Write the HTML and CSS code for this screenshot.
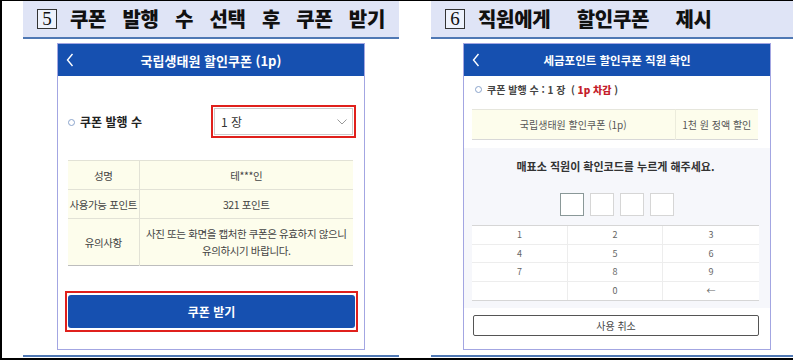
FILE: index.html
```html
<!DOCTYPE html>
<html lang="ko">
<head>
<meta charset="utf-8">
<link rel="stylesheet" href="styles.css">
</head>
<body>
<div class="page">
  <section class="col col1">
    <div class="band"><span class="num">5</span><h1>쿠폰 발행 수 선택 후 쿠폰 받기</h1></div>
    <div class="phone">
      <div class="bar">
        <svg class="back" width="8" height="14" viewBox="0 0 8 14"><polyline points="6.5,1 1.5,7 6.5,13" fill="none" stroke="#fff" stroke-width="1.4"/></svg>
        <span class="bar-title">국립생태원 할인쿠폰 (1p)</span>
        <span></span>
      </div>
      <div class="body1">
        <div class="qty">
          <span class="lbl"><i class="dot"></i>쿠폰 발행 수</span>
          <div class="sel-wrap">
            <div class="sel"><span>1 장</span>
              <svg width="10" height="6" viewBox="0 0 10 6"><polyline points="0.5,0.5 5,5 9.5,0.5" fill="none" stroke="#999" stroke-width="1"/></svg>
            </div>
          </div>
        </div>
        <table class="info">
          <tr class="r1"><th>성명</th><td>테***인</td></tr>
          <tr class="r2"><th>사용가능 포인트</th><td>321 포인트</td></tr>
          <tr class="r3"><th>유의사항</th><td>사진 또는 화면을 캡처한 쿠폰은 유효하지 않으니<br>유의하시기 바랍니다.</td></tr>
        </table>
        <div class="btn-wrap"><div class="btn">쿠폰 받기</div></div>
      </div>
    </div>
    <div class="foot"></div>
  </section>
  <section class="col col2">
    <div class="band"><span class="num">6</span><h1>직원에게 할인쿠폰 제시</h1></div>
    <div class="phone">
      <div class="bar">
        <svg class="back" width="8" height="14" viewBox="0 0 8 14"><polyline points="6.5,1 1.5,7 6.5,13" fill="none" stroke="#fff" stroke-width="1.4"/></svg>
        <span class="bar-title small">세금포인트 할인쿠폰 직원 확인</span>
        <span></span>
      </div>
      <div class="body2">
        <p class="issued"><i class="dot"></i>쿠폰 발행 수 : 1 장 &nbsp;( <b class="red">1p 차감</b> )</p>
        <table class="coupon">
          <tr><td class="c1">국립생태원 할인쿠폰 (1p)</td><td class="c2">1천 원 정액 할인</td></tr>
        </table>
        <div class="panel">
          <p class="msg">매표소 직원이 확인코드를 누르게 해주세요.</p>
          <div class="codes"><span class="code on"></span><span class="code"></span><span class="code"></span><span class="code"></span></div>
          <div class="keypad">
            <span>1</span><span>2</span><span>3</span>
            <span>4</span><span>5</span><span>6</span>
            <span>7</span><span>8</span><span>9</span>
            <span></span><span>0</span><span>←</span>
          </div>
        </div>
        <div class="cancel">사용 취소</div>
      </div>
    </div>
    <div class="foot"></div>
  </section>
</div>
</body>
</html>
```
FILE: styles.css
```css
* { box-sizing: border-box; margin: 0; padding: 0; }
html, body { width: 793px; height: 360px; overflow: hidden; background: #fff; }
body { font-family: "Noto Sans CJK KR", "Noto Sans", sans-serif; color: #333; }

.page {
  display: flex;
  height: 360px;
  border-left: 2px solid #000;
  border-top: 1px solid #000;
  border-bottom: 2px solid #000;
  padding-left: 21px;
  gap: 32px;
}
.col { display: flex; flex-direction: column; }
.col1 { width: 376px; }
.col2 { flex: 1; }

.band {
  height: 38px;
  background: #dfe4f6;
  border-bottom: 2px solid #4f78b4;
  display: flex;
  align-items: center;
  padding-left: 14px;
}
.num {
  width: 20px; height: 20px;
  border: 1px solid #333;
  background: #eef2fc;
  font-family: "Liberation Serif", serif;
  font-size: 19px;
  line-height: 18px;
  text-align: center;
  color: #111;
  margin-right: 13px;
  flex: none;
}
.band h1 {
  font-size: 20px;
  font-weight: 900;
  color: #111;
  letter-spacing: -0.3px;
  line-height: 24px;
  white-space: nowrap;
}
.col1 .band h1 { word-spacing: 11px; }
.col2 .band h1 { word-spacing: 21px; }

.phone {
  width: 308px;
  height: 307px;
  margin-top: 4px;
  border: 1px solid #a3a6e2;
  background: #fff;
  display: flex;
  flex-direction: column;
}
.col1 .phone { margin-left: 34px; }
.col2 .phone { margin-left: 32px; }

.foot { margin-top: auto; height: 2px; background: #4f78b4; margin-bottom: 1px; }

.bar {
  height: 32px;
  background: #1650b0;
  display: grid;
  grid-template-columns: 30px 1fr 30px;
  align-items: center;
}
.back { margin-left: 8px; }
.bar-title { color: #fff; font-weight: 700; font-size: 13px; text-align: center; }
.bar-title.small { font-size: 11.5px; }

.dot {
  display: inline-block;
  width: 7px; height: 7px;
  border: 1.5px solid #8aa4cc;
  border-radius: 50%;
  margin-right: 5px;
  vertical-align: 1px;
}

/* left body */
.body1 { padding: 29px 8px 0 10px; }
.qty { display: flex; align-items: center; justify-content: space-between; height: 33px; }
.lbl { font-size: 12px; font-weight: 700; color: #222; }
.sel-wrap { width: 145px; height: 33px; border: 2px solid #e0201c; padding: 1px; }
.sel {
  height: 100%;
  border: 1px solid #ccc;
  display: flex; align-items: center; justify-content: space-between;
  padding: 0 5px 0 6px;
  font-size: 12px; color: #333;
}
.info {
  margin-top: 22px;
  width: 285px;
  border-collapse: collapse;
  background: #fdfdec;
  font-size: 10.5px;
  letter-spacing: -0.4px;
  color: #444;
  border-top: 1px solid #bdbdbd;
  border-bottom: 1px solid #bdbdbd;
}
.info th, .info td { font-weight: 400; text-align: center; border-top: 1px solid #e2e2d6; white-space: nowrap; }
.info th { width: 71px; border-right: 1px solid #e2e2d6; }
.info td { line-height: 17px; }
.info .r1 { height: 29px; }
.info .r2 { height: 29px; }
.info .r3 { height: 47px; }

.btn-wrap { margin-top: 25px; width: 293px; height: 41px; margin-left: -3px; border: 2px solid #e0201c; padding: 2px 1px; }
.btn {
  height: 100%;
  background: #1650b0;
  border-radius: 3px;
  color: #fff; font-weight: 700; font-size: 12px;
  display: flex; align-items: center; justify-content: center;
}

/* right body */
.body2 { padding: 7px 11px 0 8px; }
.issued { font-size: 10px; font-weight: 700; color: #444; line-height: 14px; padding-left: 3px; }
.red { color: #c4202a; }
.coupon {
  margin-top: 12px;
  width: 286px;
  border-collapse: collapse;
  background: #fdfdec;
  font-size: 10px; color: #555;
  border-top: 1px solid #e6e6dc; border-bottom: 1px solid #d8d8d8;
}
.coupon tr { height: 30px; }
.coupon td { text-align: center; }
.coupon .c1 { width: 203px; border-right: 1px solid #ececdc; }
.panel {
  margin: 8px -11px 0 -8px;
  padding: 0 11px 0 8px;
  background: #f6f7fb;
  height: 160px;
}
.msg { text-align: center; font-size: 11px; font-weight: 700; color: #333; padding-top: 10px; line-height: 16px; }
.codes { display: flex; justify-content: center; gap: 6px; margin-top: 19px; padding-left: 2px; }
.code { width: 24px; height: 23px; background: #fff; border: 1px solid #d6d6d6; }
.code.on { border-color: #8a9898; }
.keypad {
  margin-top: 9px;
  display: grid;
  grid-template-columns: 96px 95px 1fr;
  background: #fff;
  border-top: 1px solid #d6d6d6;
  border-bottom: 1px solid #d6d6d6;
}
.keypad span {
  height: 18.5px;
  display: flex; align-items: center; justify-content: center;
  font-size: 9px; color: #666;
  border-bottom: 1px solid #ededed;
  border-right: 1px solid #ededed;
}
.keypad span:nth-child(3n) { border-right: none; }
.keypad span:nth-last-child(-n+3) { border-bottom: none; }
.cancel {
  margin-top: 7px;
  margin-left: 1px;
  height: 21px;
  border: 1.5px solid #555;
  border-radius: 2px;
  display: flex; align-items: center; justify-content: center;
  font-size: 10px; color: #444;
}
```
